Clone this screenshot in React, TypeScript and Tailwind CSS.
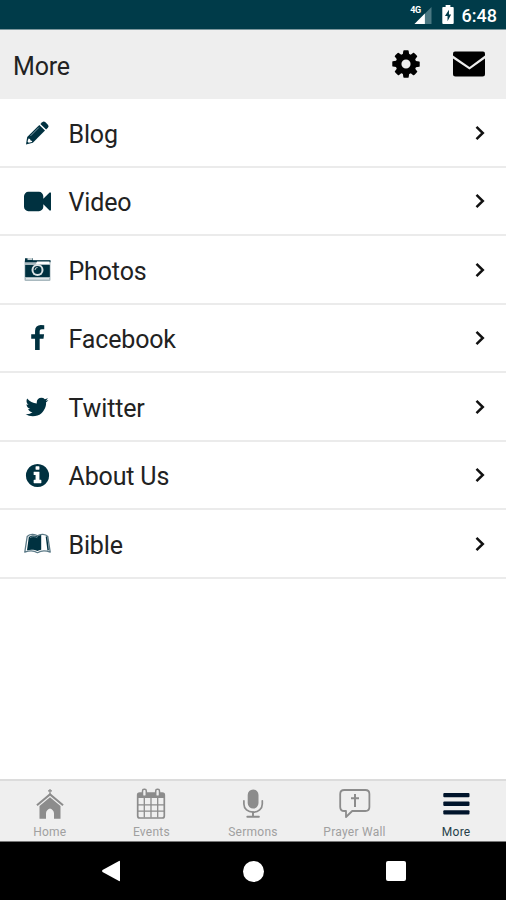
import type { ReactNode } from 'react';

interface MenuRow {
  label: string;
  icon: ReactNode;
}

interface TabItem {
  label: string;
  icon: ReactNode;
  active?: boolean;
}

const Glyph = ({ d, className }: { d: string; className: string }) => (
  <svg viewBox="0 0 1792 1792" fill="currentColor" className={className}>
    <path d={d} />
  </svg>
);

const glyphs = {
  video:
    'M1792 352v1088q0 42-39 59-13 5-25 5-27 0-45-19l-403-403v166q0 119-84.500 203.500t-203.500 84.500h-704q-119 0-203.500-84.500t-84.500-203.500v-704q0-119 84.500-203.500t203.500-84.500h704q119 0 203.500 84.500t84.500 203.500v165l403-402q18-19 45-19 12 0 25 5 39 17 39 59z',
  facebook:
    'M1343 12v264h-157q-86 0-116 36t-30 108v189h293l-39 296h-254v759h-306v-759h-255v-296h255v-218q0-186 104-288.500t277-102.500q147 0 228 12z',
  twitter:
    'M1684 408q-67 98-162 167 1 14 1 42 0 130-38 259.500t-115.500 248.500-184.500 210.500-258 146-323 54.500q-271 0-496-145 35 4 78 4 225 0 401-138-105-2-188-64.500t-114-159.500q33 5 61 5 43 0 85-11-112-23-185.500-111.500t-73.500-205.500v-4q68 38 146 41-66-44-105-115t-39-154q0-88 44-163 121 149 294.500 238.500t371.500 99.500q-8-38-8-74 0-134 94.500-228.500t228.500-94.500q140 0 236 102 109-21 205-78-37 115-142 178 93-10 186-50z',
  info: 'M1152 1376v-160q0-14-9-23t-23-9h-96v-512q0-14-9-23t-23-9h-320q-14 0-23 9t-9 23v160q0 14 9 23t23 9h96v320h-96q-14 0-23 9t-9 23v160q0 14 9 23t23 9h448q14 0 23-9t9-23zm-128-896v-160q0-14-9-23t-23-9h-192q-14 0-23 9t-9 23v160q0 14 9 23t23 9h192q14 0 23-9t9-23zm640 416q0 209-103 385.500t-279.500 279.500-385.500 103-385.500-103-279.500-279.500-103-385.500 103-385.500 279.500-279.500 385.500-103 385.500 103 279.500 279.500 103 385.500z',
  cog: 'M1152 896q0-106-75-181t-181-75-181 75-75 181 75 181 181 75 181-75 75-181zm512-109v222q0 12-8 23t-20 13l-185 28q-19 54-39 91 35 50 107 138 10 12 10 25t-9 23q-27 37-99 108t-94 71q-12 0-26-9l-138-108q-44 23-91 38-16 136-29 186-7 28-36 28h-222q-14 0-24.500-8.500t-11.500-21.500l-28-184q-49-16-90-37l-141 107q-10 9-25 9-14 0-25-11-126-114-165-168-7-10-7-23 0-12 8-23 15-21 51-66.500t54-70.500q-27-50-41-99l-183-27q-13-2-21-12.500t-8-23.500v-222q0-12 8-23t19-13l186-28q14-46 39-92-40-57-107-138-10-12-10-24 0-10 9-23 26-36 98.500-107.500t94.500-71.500q13 0 26 10l138 107q44-23 91-38 16-136 29-186 7-28 36-28h222q14 0 24.500 8.500t11.500 21.500l28 184q49 16 90 37l142-107q9-9 24-9 13 0 25 10 129 119 165 170 7 8 7 22 0 12-8 23-15 21-51 66.500t-54 70.500q26 50 41 98l183 28q13 2 21 12.500t8 23.500z',
};

const PencilIcon = () => (
  <svg viewBox="0 0 27 27" className="size-[27px]" fill="currentColor">
    <path d="M18.200 3.200q1.500-1.400 3-.1l2.700 2.600q1.400 1.500 0 3l-1.800 1.800-5.700-5.600z" />
    <path d="M15.300 5.900 21 11.600 8.800 23.800 2 25.500l1.200-7.500z" />
    <path d="M14.900 8.500 6.500 16.900" stroke="#8ba6b2" strokeWidth="0.900" />
    <path d="m4.500 19.500 1.500.4.600 1.600 1.600.6-.3.800-3.200.9-1.200-1.200z" fill="#fff" />
  </svg>
);

const CameraIcon = () => (
  <svg viewBox="0 0 27 27" className="size-[27px]">
    <rect x="0.500" y="4" width="26" height="21" rx="1.200" fill="#a9b9bf" />
    <path d="M1 2.300h8v2h17.500v2H1z" fill="currentColor" />
    <path d="M3.500 2h5v2h-5z" fill="#c5d0d3" />
    <path d="M13 5.500h12.500v2.500H12z" fill="#fff" />
    <path d="M1.200 9h24.600v12H1.200z" fill="currentColor" />
    <path d="M2 22h23v1.500H2z" fill="#e1e7e9" />
    <circle cx="13.500" cy="14" r="6" fill="#dce4e6" />
    <circle cx="13.500" cy="14" r="4" fill="currentColor" />
    <path d="M11 14a2.500 2.500 0 0 1 2.500-2.500" fill="none" stroke="#c5d0d3" strokeWidth="1" />
  </svg>
);

const BookIcon = () => (
  <svg viewBox="0 0 27 27" className="size-[27px]" fill="none" stroke="currentColor">
    <path
      d="M3.200 6.500C5.500 3.800 10.500 3.600 13.500 5.700c3-2.100 8-1.900 10.300.8l2.400 15.700c-4.200-1.800-9.200-1.700-12.700.5-3.500-2.200-8.500-2.300-12.700-.5z"
      stroke="#5b7986"
      strokeWidth="1.300"
      strokeLinejoin="round"
    />
    <path d="M4.800 7C7 4.900 11 5 13.600 6.500q1.500-1.200 3.600-1.500v14.800q-2 .2-3.700 1.300c-3-1.700-7-1.700-10.500-.8z" fill="currentColor" stroke="none" />
    <path d="M22.400 6.500 24.200 20.300" strokeWidth="1.500" />
    <path d="M6 7.700c2.300-1.500 5-1.300 7.300 0" stroke="#8ba6b2" strokeWidth="0.700" />
  </svg>
);

const rows: MenuRow[] = [
  { label: 'Blog', icon: <PencilIcon /> },
  { label: 'Video', icon: <Glyph d={glyphs.video} className="size-[27px]" /> },
  { label: 'Photos', icon: <CameraIcon /> },
  { label: 'Facebook', icon: <Glyph d={glyphs.facebook} className="mr-px size-[27px]" /> },
  { label: 'Twitter', icon: <Glyph d={glyphs.twitter} className="mr-px size-[26px]" /> },
  { label: 'About Us', icon: <Glyph d={glyphs.info} className="size-[27px]" /> },
  { label: 'Bible', icon: <BookIcon /> },
];

const HomeIcon = () => (
  <svg viewBox="0 0 32 32" className="size-8" fill="currentColor">
    <path d="M15.400 1h1.200v1.300h1.400v1.100h-1.400v3h-1.200v-3H14V2.300h1.400z" />
    <path d="M16 5 29.700 16.500l-1.300 1.500L16 7.700 3.600 18l-1.300-1.500z" />
    <path d="M16 9.200 26.500 18v12.800H20v-5.300c0-2.500-1.500-4-4-5-2.500 1-4 2.500-4 5v5.300H5.500V18z" />
  </svg>
);

const CalendarIcon = () => (
  <svg viewBox="0 0 32 32" className="size-8" fill="none" stroke="currentColor">
    <rect x="2.700" y="5" width="26.600" height="25" rx="2" strokeWidth="1.700" />
    <path d="M3 5h26v5H3z" fill="currentColor" stroke="none" />
    <path d="M3 16.800h26M3 23.200h26M9.300 10v19.500M16 10v19.500M22.700 10v19.500" strokeWidth="1.300" />
    <rect x="7.500" y="1.300" width="3.800" height="7" rx="1.600" fill="#efefef" strokeWidth="1.500" />
    <rect x="20.700" y="1.300" width="3.800" height="7" rx="1.600" fill="#efefef" strokeWidth="1.500" />
  </svg>
);

const MicIcon = () => (
  <svg viewBox="0 0 32 32" className="size-8" fill="none" stroke="currentColor">
    <rect x="10.700" y="1.500" width="10.800" height="19" rx="5.400" fill="currentColor" stroke="none" />
    <path d="M6.900 12.800v3.200c0 4.900 4 8.200 9.200 8.200s9.200-3.300 9.200-8.200v-3.200" strokeWidth="1.700" strokeLinecap="round" />
    <path d="M16 24.200v4M10.300 28.800h11.600" strokeWidth="1.900" strokeLinecap="round" />
  </svg>
);

const PrayerIcon = () => (
  <svg viewBox="0 0 32 32" className="size-8" fill="none" stroke="currentColor" strokeWidth="1.800">
    <path d="M5.200 2h21.200q4 0 4 4v13q0 4-4 4H13.200L7 29v-6H5.200q-4 0-4-4V6q0-4 4-4z" strokeLinejoin="round" />
    <path d="M16 6v13M12 10.200h8" strokeWidth="2" />
  </svg>
);

const MenuIcon = () => (
  <svg viewBox="0 0 32 32" className="size-8" fill="currentColor">
    <rect x="3.300" y="5" width="26.200" height="4.300" rx="1" />
    <rect x="3.300" y="13.600" width="26.200" height="4.300" rx="1" />
    <rect x="3.300" y="22.300" width="26.200" height="4.300" rx="1" />
  </svg>
);

const tabs: TabItem[] = [
  { label: 'Home', icon: <HomeIcon /> },
  { label: 'Events', icon: <CalendarIcon /> },
  { label: 'Sermons', icon: <MicIcon /> },
  { label: 'Prayer Wall', icon: <PrayerIcon /> },
  { label: 'More', icon: <MenuIcon />, active: true },
];

const StatusBar = () => (
  <div className="flex h-[30px] items-center justify-end border-b border-[#7d979d] bg-[#003b49] pr-[9px] text-white">
    <div className="flex items-start">
      <span className="-mr-[7px] text-[9px] leading-[8px] font-bold tracking-[-0.5px]">4G</span>
      <svg viewBox="0 0 18 18" className="mt-px h-[17px] w-[18px]">
        <path d="M18 0v18H0z" fill="#4b7882" />
        <path d="M11 7v11H0z" fill="#fff" />
      </svg>
    </div>
    <svg viewBox="0 0 12 20" className="ml-2.5 h-[19px] w-3">
      <path d="M3.500 0h5v2H11q1 0 1 1v16q0 1-1 1H1q-1 0-1-1V3q0-1 1-1h2.500z" fill="#fff" />
      <path d="M7 5 2.800 11.700h2.700V17L9.300 10H7z" fill="#003b49" />
    </svg>
    <span className="mt-[3px] ml-2 text-[18px] leading-5 font-medium">6:48</span>
  </div>
);

const Header = () => (
  <header className="flex h-[69px] items-center justify-between bg-[#eeeeee] pr-[21px] pl-[13px]">
    <h1 className="pt-[3px] text-[25px] leading-none tracking-[-0.200px] text-[#222]">More</h1>
    <div className="flex items-center gap-[31px] pb-px text-black">
      <Glyph d={glyphs.cog} className="size-8" />
      <svg viewBox="0 0 32 26" className="h-[26px] w-8" fill="currentColor">
        <path d="M2 0.500h28q2 0 2 2v2L16.500 16 0 4.500v-2q0-2 2-2z" />
        <path d="M0 7.500 16.500 18.500 32 7.500V23q0 2.500-2.500 2.500h-27Q0 25.500 0 23z" />
      </svg>
    </div>
  </header>
);

export default function App() {
  return (
    <div className="flex h-[900px] w-[506px] flex-col overflow-hidden bg-white font-['Roboto',sans-serif]">
      <StatusBar />
      <Header />

      <main className="flex-1">
        {rows.map((row) => (
          <button
            key={row.label}
            type="button"
            className="flex h-[68.500px] w-full items-center border-b-2 border-[#ebebeb] pt-px pr-5 pl-[22px] text-left"
          >
            <span className="flex w-[31px] justify-center text-[#003140]">{row.icon}</span>
            <span className="ml-[15.500px] flex-1 pt-[3px] text-[25px] leading-none tracking-[-0.150px] text-[#222]">
              {row.label}
            </span>
            <svg viewBox="0 0 12 16" className="h-4 w-3" fill="none" stroke="#111" strokeWidth="2.500">
              <path d="M2.500 1.800 8.800 8l-6.300 6.200" />
            </svg>
          </button>
        ))}
      </main>

      <nav className="-mx-px flex h-[63px] border-t-2 border-b border-t-[#dcdcdc] border-b-[#777] bg-[#efefef]">
        {tabs.map((tab) => (
          <button
            key={tab.label}
            type="button"
            className={`flex flex-1 flex-col items-center pt-[7px] ${tab.active ? 'text-[#00142b]' : 'text-[#8c8c8c]'}`}
          >
            {tab.icon}
            <span
              className={`mt-[5px] text-[12px] leading-[14px] tracking-[0.250px] ${tab.active ? 'text-[#263f4a]' : 'text-[#a0a0a0]'}`}
            >
              {tab.label}
            </span>
          </button>
        ))}
      </nav>

      <div className="flex h-[58px] items-center justify-center gap-[122px] bg-black text-white">
        <svg viewBox="0 0 20 22" className="h-[22px] w-5" fill="currentColor">
          <path d="M19 1.500v19q0 1-1 .5L1.500 12q-1-1 0-2L18 1q1-.5 1 .5z" />
        </svg>
        <span className="size-[21px] rounded-full bg-white" />
        <span className="size-5 rounded-[2px] bg-white" />
      </div>
    </div>
  );
}
